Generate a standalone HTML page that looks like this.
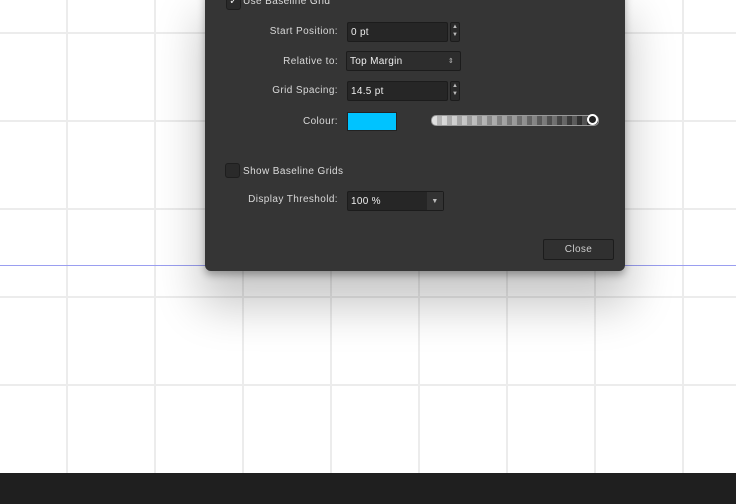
<!DOCTYPE html>
<html><head><style>
body{margin:0;width:736px;height:504px;overflow:hidden;position:relative;background:#fff;font-family:"Liberation Sans",sans-serif;}
.v{position:absolute;top:0;width:2px;height:473px;background:#ececec}
.h{position:absolute;left:0;height:2px;width:736px;background:#ececec}
.dlg{position:absolute;z-index:3;left:205px;top:-10px;width:420px;height:281px;background:#353535;border-radius:0 0 6px 6px;box-shadow:0 30px 45px 5px rgba(0,0,0,.22),0 4px 8px rgba(0,0,0,.3);}
.lbl{position:absolute;color:#d8d8d8;font-size:10px;letter-spacing:.4px;text-align:right;width:133px;left:0}
.fld{position:absolute;background:#262626;border:1px solid #1c1c1c;border-radius:2px;color:#eee;font-size:10px;letter-spacing:.3px;line-height:19px;padding-left:3px;box-sizing:border-box;height:20px}
.sp{position:absolute;width:10px;height:20px;background:#2a2a2a;border:1px solid #1c1c1c;border-radius:2px;box-sizing:border-box;color:#bbb;font-size:6px;line-height:8px;text-align:center}
.cb{position:absolute;width:13px;height:13px;background:#2a2a2a;border:1px solid #1e1e1e;border-radius:3px}
</style></head><body>
<div class="v" style="left:66px"></div><div class="v" style="left:154px"></div><div class="v" style="left:242px"></div><div class="v" style="left:330px"></div><div class="v" style="left:418px"></div><div class="v" style="left:506px"></div><div class="v" style="left:594px"></div><div class="v" style="left:682px"></div>
<div class="h" style="top:32px"></div><div class="h" style="top:120px"></div><div class="h" style="top:208px"></div><div class="h" style="top:296px"></div><div class="h" style="top:384px"></div>
<div style="position:absolute;left:0;top:265px;width:736px;height:1px;background:#9a9ef0"></div>
<div style="position:absolute;left:0;top:473px;width:736px;height:31px;background:#1f1f1f"></div>
<div class="dlg">
<div class="cb" style="left:21px;top:5px;color:#eee;font-size:10px;line-height:12px;text-align:center">✓</div>
<div style="position:absolute;left:38px;top:6px;color:#ddd;font-size:10px;letter-spacing:.4px">Use Baseline Grid</div>
<div class="lbl" style="top:36px">Start Position:</div>
<div class="fld" style="left:142px;top:32px;width:101px">0 pt</div><div class="sp" style="left:245px;top:32px">▲<br>▼</div>
<div class="lbl" style="top:66px">Relative to:</div>
<div class="fld" style="left:141px;top:61px;width:115px;background:#2d2d2d">Top Margin<span style="position:absolute;right:6px;font-size:7px;color:#bbb">⇕</span></div>
<div class="lbl" style="top:95px">Grid Spacing:</div>
<div class="fld" style="left:142px;top:91px;width:101px">14.5 pt</div><div class="sp" style="left:245px;top:91px">▲<br>▼</div>
<div class="lbl" style="top:126px">Colour:</div>
<div style="position:absolute;left:142px;top:122px;width:48px;height:17px;background:#00c3ff;border:1px solid #222"></div>
<div style="position:absolute;left:226px;top:125px;width:166px;height:9px;border-radius:5px;background:repeating-linear-gradient(90deg,rgba(255,255,255,.15) 0 5px,rgba(0,0,0,.15) 5px 10px),linear-gradient(90deg,#ddd,#888 50%,#222);border:1px solid #999"></div>
<div style="position:absolute;left:382px;top:124px;width:7px;height:7px;border-radius:50%;border:2px solid #fff;background:#222"></div>
<div class="cb" style="left:20px;top:173px"></div>
<div style="position:absolute;left:38px;top:176px;color:#ddd;font-size:10px;letter-spacing:.4px">Show Baseline Grids</div>
<div class="lbl" style="top:204px">Display Threshold:</div>
<div class="fld" style="left:142px;top:201px;width:97px">100 %<span style="position:absolute;right:0;top:0;width:16px;height:18px;background:#333;color:#bbb;font-size:7px;text-align:center">▼</span></div>
<div style="position:absolute;left:338px;top:249px;width:69px;height:19px;border:1px solid #1c1c1c;border-radius:2px;background:#303030;color:#ccc;font-size:10px;letter-spacing:.4px;text-align:center;line-height:19px">Close</div>
</div>
</body></html>
